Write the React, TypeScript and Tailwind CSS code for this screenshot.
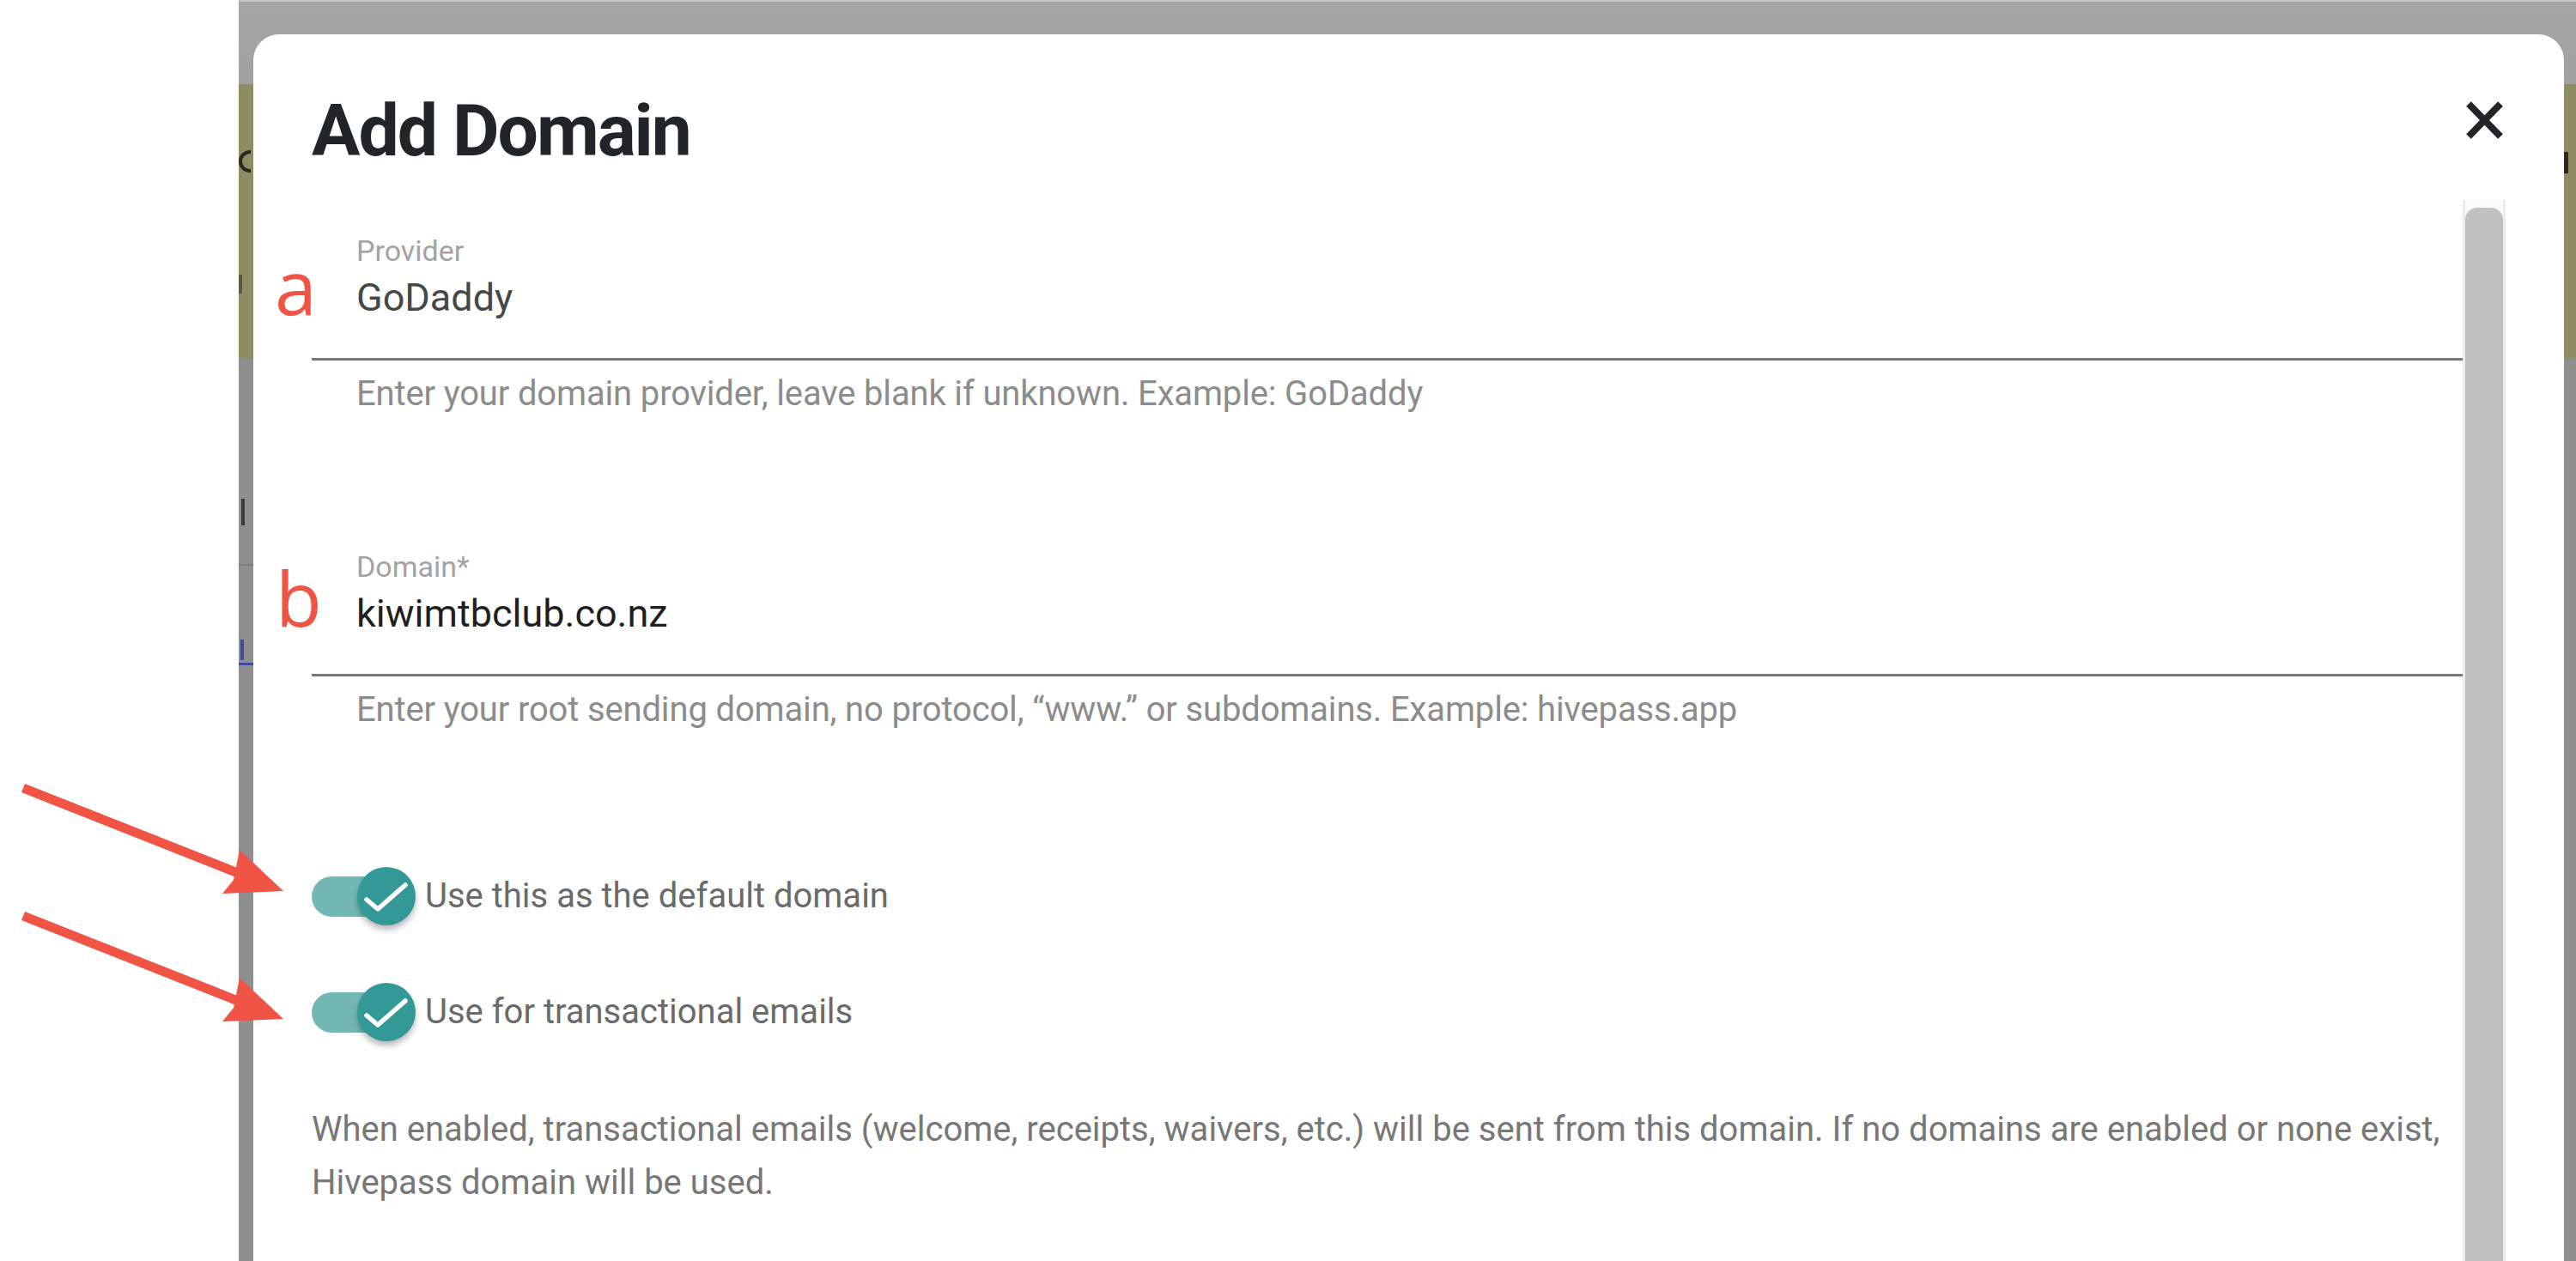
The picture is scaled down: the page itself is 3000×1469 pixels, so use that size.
import React from "react";

function Toggle({ label }: { label: string }) {
  return (
    <div className="flex items-center h-[68px]">
      <div className="relative w-[121px] h-[68px] shrink-0">
        <div className="absolute left-0 top-[11px] w-[105px] h-[47px] rounded-full bg-[#74b8b5]" />
        <div className="absolute right-0 top-0 w-[68px] h-[68px] rounded-full bg-[#329996] shadow-[0_5px_7px_rgba(0,0,0,0.28)]">
          <svg width="68" height="68" viewBox="0 0 68 68">
            <polyline
              points="11,38 24,49 56,21"
              fill="none"
              stroke="white"
              strokeWidth="5.5"
              strokeLinecap="round"
              strokeLinejoin="round"
            />
          </svg>
        </div>
      </div>
      <span className="ml-[11px] text-[40px] leading-[48px] text-[#6a6a6a] whitespace-nowrap">
        {label}
      </span>
    </div>
  );
}

function Field({
  label,
  value,
  valueColor,
  helper,
}: {
  label: string;
  value: string;
  valueColor: string;
  helper: string;
}) {
  return (
    <div className="flex flex-col">
      <div className="border-b-[3px] border-[#777777] pb-[42px] pl-[52px] flex flex-col">
        <div className="text-[34px] leading-[40px] text-[#a3a3a3]">{label}</div>
        <div className={`mt-[7px] text-[45px] leading-[56px] ${valueColor}`}>{value}</div>
      </div>
      <div className="mt-[15px] pl-[52px] text-[40px] leading-[48px] text-[#8c8c8c] tracking-[-0.15px] whitespace-nowrap">
        {helper}
      </div>
    </div>
  );
}

export default function App() {
  return (
    <div className="relative w-[3000px] h-[1469px] overflow-hidden bg-white flex font-['Roboto','Liberation_Sans',sans-serif]">
      {/* white annotation margin */}
      <div className="w-[278px] shrink-0 bg-white" />

      {/* screenshot region with backdrop */}
      <div className="flex-1 flex bg-[linear-gradient(to_bottom,#c4c4c4_0px,#c4c4c4_2px,#a5a5a5_2px,#a2a2a2_98px,#8e8c62_98px,#8e8c62_418px,#8f8f8f_418px)]">
        {/* left strip (page behind the dialog) */}
        <div className="w-[17px] shrink-0 overflow-hidden flex flex-col">
          <div className="mt-[175px] w-[14px] h-[26px] rounded-l-full border-[4px] border-r-0 border-[#2b2a1d]" />
          <div className="mt-[119px] w-[4px] h-[22px] bg-[#5c5a40]" />
          <div className="mt-[239px] ml-[3px] w-[4px] h-[31px] bg-[#3a3a3a]" />
          <div className="mt-[45px] h-[2px] bg-[#7d7d7d]" />
          <div className="mt-[86px] ml-[2px] w-[12px] h-[24px] border-l-[4px] border-[#3b4a9e]" />
          <div className="mt-[3px] h-[3px] bg-[#3b4a9e]" />
        </div>

        {/* modal */}
        <div className="mt-[40px] flex-1 h-[1429px] bg-white rounded-t-[30px] flex flex-col">
          <div className="flex justify-between items-start pl-[68px] pr-[71px] pt-[63px]">
            <h2 className="text-[84px] leading-[100px] font-bold tracking-[-2px] text-[#212529]">Add Domain</h2>
            <svg className="mt-[15px]" width="43" height="44" viewBox="0 0 43 44">
              <path d="M3 3 L40 41 M40 3 L3 41" stroke="#212529" strokeWidth="8" strokeLinecap="butt" />
            </svg>
          </div>

          <div className="mt-[30px] flex-1 min-h-0 flex pl-[68px] pr-[68px]">
            <div className="flex-1 flex flex-col pt-[39px]">
              <Field
                label="Provider"
                value="GoDaddy"
                valueColor="text-[#474747]"
                helper="Enter your domain provider, leave blank if unknown. Example: GoDaddy"
              />
              <div className="mt-[157px]">
                <Field
                  label="Domain*"
                  value="kiwimtbclub.co.nz"
                  valueColor="text-[#1f1f1f]"
                  helper="Enter your root sending domain, no protocol, “www.” or subdomains. Example: hivepass.app"
                />
              </div>
              <div className="mt-[159px]">
                <Toggle label="Use this as the default domain" />
              </div>
              <div className="mt-[67px]">
                <Toggle label="Use for transactional emails" />
              </div>
              <p className="mt-[72px] text-[40px] leading-[62px] text-[#777777]">
                When enabled, transactional emails (welcome, receipts, waivers, etc.) will be sent from this domain. If no
                domains are enabled or none exist, Hivepass domain will be used.
              </p>
            </div>

            {/* scrollbar */}
            <div className="w-[50px] shrink-0 bg-[#fafafa] border-x-[3px] border-[#ececec] pt-[9px] flex justify-center">
              <div className="w-[28px] flex-1 bg-[#c1c1c1] rounded-t-[14px]" />
            </div>
          </div>
        </div>

        {/* right strip (page behind the dialog) */}
        <div className="w-[14px] shrink-0 overflow-hidden flex flex-col">
          <div className="mt-[177px] w-[5px] h-[25px] bg-[#2b2a1d]" />
        </div>
      </div>

      {/* annotations */}
      <div className="absolute left-[320px] top-[289px] text-[88px] leading-[88px] text-[#ef5444] font-['Open_Sans','Noto_Sans',sans-serif]">
        a
      </div>
      <div className="absolute left-[321px] top-[652px] text-[88px] leading-[88px] text-[#ef5444] font-['Open_Sans','Noto_Sans',sans-serif]">
        b
      </div>
      <svg className="absolute left-0 top-0 pointer-events-none" width="3000" height="1469" viewBox="0 0 3000 1469">
        <g fill="#ef5444" stroke="none">
          <line x1="27" y1="918" x2="282" y2="1019" stroke="#ef5444" strokeWidth="11" />
          <polygon points="279,990 330,1038 259,1041 272,1025" />
          <line x1="27" y1="1067" x2="282" y2="1168" stroke="#ef5444" strokeWidth="11" />
          <polygon points="279,1139 330,1187 259,1190 272,1174" />
        </g>
      </svg>
    </div>
  );
}
